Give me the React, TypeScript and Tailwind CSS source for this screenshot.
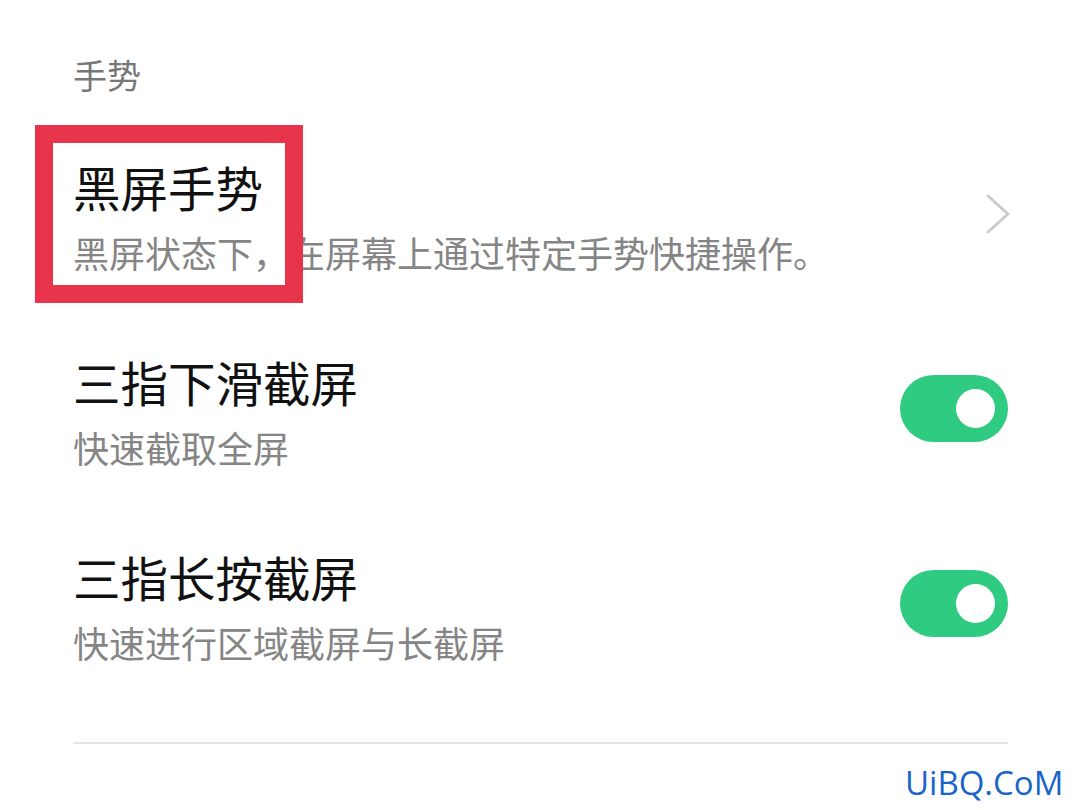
import React from "react"

function Toggle() {
  return (
    <div className="w-[108px] h-[67px] rounded-full bg-[#2fcb80] flex items-center justify-end pr-[13px] shrink-0">
      <div className="w-[39px] h-[39px] rounded-full bg-white" />
    </div>
  )
}

function Chevron() {
  return (
    <svg width="30" height="44" viewBox="0 0 30 44" className="shrink-0 mr-[-4px]">
      <polyline points="6,4 26,22 6,40" fill="none" stroke="#cbcbcb" strokeWidth="3" strokeLinecap="round" strokeLinejoin="round" />
    </svg>
  )
}

interface RowProps {
  title: string
  desc: string
  right: React.ReactNode
}

function Row({ title, desc, right }: RowProps) {
  return (
    <div className="flex items-center justify-between">
      <div className="flex flex-col">
        <div className="text-[47.5px] leading-[70px] text-[#111]">{title}</div>
        <div className="text-[36px] leading-[60px] text-[#858585]">{desc}</div>
      </div>
      <div className="-mt-[7px]">{right}</div>
    </div>
  )
}

export default function App() {
  return (
    <div
      className="w-[1080px] h-[810px] bg-white relative overflow-hidden"
      style={{ fontFamily: '"Noto Sans CJK SC", "Noto Sans", sans-serif' }}
    >
      <div className="pl-[73px] pr-[72px] pt-[51px] flex flex-col">
        <div className="text-[34px] leading-[48px] text-[#777]">手势</div>
        <div className="mt-[53px] flex flex-col gap-[65px]">
          <Row title="黑屏手势" desc="黑屏状态下，在屏幕上通过特定手势快捷操作。" right={<Chevron />} />
          <Row title="三指下滑截屏" desc="快速截取全屏" right={<Toggle />} />
          <Row title="三指长按截屏" desc="快速进行区域截屏与长截屏" right={<Toggle />} />
        </div>
        <div className="mt-[70px] h-[2px] bg-[#e6e6e6]" />
      </div>

      <div className="absolute left-[35px] top-[125px] w-[268px] h-[178px] border-[18px] border-[#e7344b]" />

      <div
        className="absolute left-[905px] top-[762px] text-[33px] leading-[42px] text-[#1a64c8]"
        style={{ fontFamily: '"Open Sans", "Liberation Sans", sans-serif' }}
      >
        UiBQ.CoM
      </div>
    </div>
  )
}
